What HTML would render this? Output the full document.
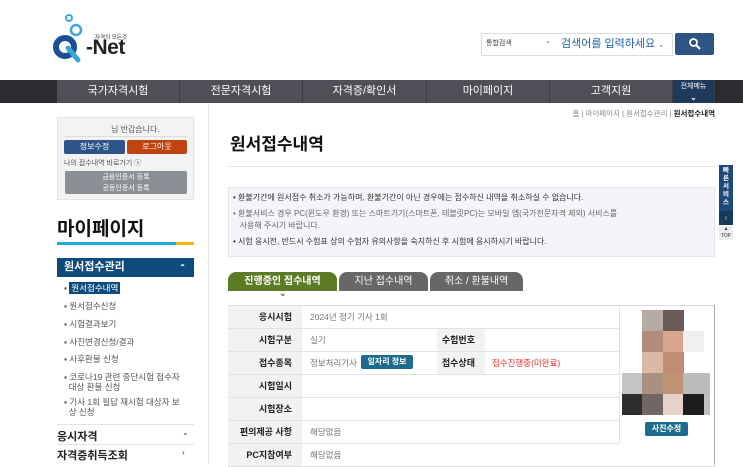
<!DOCTYPE html>
<html><head><meta charset="utf-8"><style>
*{margin:0;padding:0;box-sizing:border-box}
body{width:743px;height:465px;overflow:hidden;background:#fff;font-family:"Liberation Sans","Noto Sans CJK KR",sans-serif;position:relative;color:#333}
.a{position:absolute}
.nav{top:80px;left:0;width:743px;height:23px;background:#2b2b30}
.nav .it{position:absolute;top:0;height:23px;background:#4f4f58;color:#fff;font-size:11px;text-align:center;line-height:23px;border-right:1px solid #3c3c44}
.sb li{list-style:none;font-size:8.5px;color:#555;position:absolute;left:64px;line-height:10px}
.lbl{position:absolute;left:228px;width:74px;background:#f2f2f2;text-align:right;padding-right:10px;font-size:9px;font-weight:bold;color:#222;border-bottom:1px solid #e2e2e2;height:23px;line-height:23px}
.val{position:absolute;font-size:8.5px;color:#777;line-height:23px}
.rowl{position:absolute;left:228px;width:391px;height:1px;background:#e2e2e2}
.px{position:absolute;width:21px;height:21px}
</style></head><body>
<!-- logo -->
<svg class="a" style="left:52px;top:12px" width="40" height="54" viewBox="0 0 40 54">
<circle cx="17" cy="6" r="3" fill="none" stroke="#3aa7d9" stroke-width="2"/>
<circle cx="24" cy="18" r="5" fill="none" stroke="#3aa7d9" stroke-width="2.5"/>
<circle cx="13" cy="35" r="9" fill="none" stroke="#1a4f95" stroke-width="6"/>
<path d="M16 36 L26 48" stroke="#3aa7d9" stroke-width="5" stroke-linecap="round"/>
</svg>
<div class="a" style="left:95px;top:33px;font-size:5.5px;color:#333">자격의 모든것</div>
<div class="a" style="left:86px;top:37px;font-size:21px;font-weight:bold;color:#222;letter-spacing:-0.5px;line-height:22px">-Net</div>
<!-- search -->
<div class="a" style="left:481px;top:33px;width:192px;height:23px;border:1px solid #ddd;background:#fff"></div>
<div class="a" style="left:486px;top:38px;font-size:7px;color:#444">통합검색</div>
<div class="a" style="left:545px;top:37px;font-size:7px;color:#666">⌄</div>
<div class="a" style="left:561px;top:35px;font-size:11px;color:#1b5fae">검색어를 입력하세요 <span style="font-size:7px;color:#666">⌄</span></div>
<div class="a" style="left:675px;top:33px;width:39px;height:22px;background:#2e5385;border-radius:2px"></div>
<svg class="a" style="left:688px;top:37px" width="14" height="14"><circle cx="5.5" cy="5.5" r="3.5" fill="none" stroke="#fff" stroke-width="1.8"/><path d="M8 8 L12 12" stroke="#fff" stroke-width="2.2"/></svg>
<!-- nav -->
<div class="a nav">
<div class="it" style="left:57px;width:123px">국가자격시험</div>
<div class="it" style="left:180px;width:123px">전문자격시험</div>
<div class="it" style="left:303px;width:124px">자격증/확인서</div>
<div class="it" style="left:427px;width:123px">마이페이지</div>
<div class="it" style="left:550px;width:123px">고객지원</div>
<div class="it" style="left:673px;width:42px;background:#1d3a5a;font-size:7px;line-height:11px;padding-top:1px">전체메뉴<br><b style="font-size:8px">⌄</b></div>
</div>
<div class="a" style="right:28px;top:108px;font-size:7.5px;color:#888">홈 | 마이페이지 | 원서접수관리 | <b style="color:#222">원서접수내역</b></div>
<!-- sidebar -->
<div class="a" style="left:208px;top:103px;width:1px;height:362px;background:#e6e6e6"></div>
<div class="a" style="left:57px;top:117px;width:137px;height:83px;background:#f3f3f3;border:1px solid #e3e3e3"></div>
<div class="a" style="left:111px;top:124px;font-size:8px;color:#555">님 반갑습니다.</div>
<div class="a" style="left:64px;top:136px;width:123px;height:1px;background:#ddd"></div>
<div class="a" style="left:64px;top:140px;width:61px;height:14px;background:#2d5587;border-radius:2px;color:#fff;font-size:8px;text-align:center;line-height:14px">정보수정</div>
<div class="a" style="left:127px;top:140px;width:60px;height:14px;background:#c0440f;border-radius:2px;color:#fff;font-size:8px;text-align:center;line-height:14px">로그아웃</div>
<div class="a" style="left:64px;top:158px;font-size:7px;color:#555">나의 접수내역 바로가기 ⓢ</div>
<div class="a" style="left:65px;top:171px;width:122px;height:23px;background:#8b9097;border-radius:2px;color:#fff;font-size:7px;text-align:center;line-height:11px;padding-top:1px">금융인증서 등록<br>공동인증서 등록</div>
<div class="a" style="left:57px;top:214px;font-size:19px;font-weight:bold;color:#111">마이페이지</div>
<div class="a" style="left:57px;top:242px;width:119px;height:3px;background:#1fa9e1"></div>
<div class="a" style="left:176px;top:242px;width:18px;height:3px;background:#f6b600"></div>
<div class="a" style="left:57px;top:258px;width:137px;height:19px;background:#0e4a7c;color:#fff;font-size:11px;font-weight:bold;line-height:19px;padding-left:7px">원서접수관리<span style="position:absolute;right:8px;font-size:8px">⌃</span></div>
<ul class="sb">
<li style="top:283px">▪ <span style="background:#0e4a7c;color:#fff;padding:1px 2px">원서접수내역</span></li>
<li style="top:301px">▪ 원서접수신청</li>
<li style="top:319px">▪ 시험결과보기</li>
<li style="top:337px">▪ 사진변경신청/결과</li>
<li style="top:354px">▪ 사후환불 신청</li>
<li style="top:372px">▪ 코로나19 관련 중단시험 접수자<br>&nbsp;&nbsp;대상 환불 신청</li>
<li style="top:397px">▪ 기사 1회 필답 재시험 대상자 보<br>&nbsp;&nbsp;상 신청</li>
</ul>
<div class="a" style="left:57px;top:424px;width:137px;height:1px;background:#e3e3e3"></div>
<div class="a" style="left:57px;top:428px;font-size:11px;font-weight:bold;color:#222">응시자격</div>
<div class="a" style="left:182px;top:428px;font-size:8px">⌄</div>
<div class="a" style="left:57px;top:444px;width:137px;height:1px;background:#e3e3e3"></div>
<div class="a" style="left:57px;top:447px;font-size:11px;font-weight:bold;color:#222">자격증취득조회</div>
<div class="a" style="left:182px;top:448px;font-size:8px">›</div>
<!-- main -->
<div class="a" style="left:230px;top:130px;font-size:17px;font-weight:bold;color:#111">원서접수내역</div>
<div class="a" style="left:228px;top:166px;width:487px;height:1px;background:#e6e6e6"></div>
<div class="a" style="left:228px;top:187px;width:487px;height:70px;background:#f3f5f8;border:1px solid #e2e5ea"></div>
<div class="a" style="left:233px;top:192px;font-size:8px;color:#333;line-height:12px">
<div>• 환불기간에 원서접수 취소가 가능하며, 환불기간이 아닌 경우에는 접수하신 내역을 취소하실 수 없습니다.</div>
<div style="margin-top:4px;color:#666">• 환불서비스 경우 PC(윈도우 환경) 또는 스마트기기(스마트폰, 테블릿PC)는 모바일 앱(국가전문자격 제외) 서비스를<br>&nbsp;&nbsp;&nbsp;사용해 주시기 바랍니다.</div>
<div style="margin-top:4px">• 시험 응시전, 반드시 수험표 상의 수험자 유의사항을 숙지하신 후 시험에 응시하시기 바랍니다.</div>
</div>
<div class="a" style="left:228px;top:272px;width:109px;height:19px;background:#5b7c25;border-radius:8px 8px 0 0;color:#fff;font-size:10px;font-weight:bold;text-align:center;line-height:19px">진행중인 접수내역</div>
<div class="a" style="left:339px;top:272px;width:89px;height:19px;background:#676767;border-radius:8px 8px 0 0;color:#fff;font-size:10px;text-align:center;line-height:19px">지난 접수내역</div>
<div class="a" style="left:430px;top:272px;width:93px;height:19px;background:#676767;border-radius:8px 8px 0 0;color:#fff;font-size:10px;text-align:center;line-height:19px">취소 / 환불내역</div>
<div class="a" style="left:279px;top:288px;font-size:9px;color:#5b7c25;font-weight:bold">⌄</div>
<!-- table -->
<div class="a" style="left:228px;top:305px;width:487px;height:1px;background:#ddd"></div>
<div class="a" style="left:714px;top:305px;width:1px;height:160px;background:#aaa"></div>
<div class="lbl" style="top:306px">응시시험</div>
<div class="lbl" style="top:329px">시험구분</div>
<div class="lbl" style="top:352px">접수종목</div>
<div class="lbl" style="top:375px">시험일시</div>
<div class="lbl" style="top:398px">시험장소</div>
<div class="lbl" style="top:421px">편의제공 사항</div>
<div class="lbl" style="top:444px">PC지참여부</div>
<div class="lbl" style="top:329px;left:437px;width:48px">수험번호</div>
<div class="lbl" style="top:352px;left:437px;width:48px">접수상태</div>
<div class="rowl" style="top:328px"></div><div class="rowl" style="top:351px"></div><div class="rowl" style="top:374px"></div><div class="rowl" style="top:397px"></div><div class="rowl" style="top:420px"></div><div class="rowl" style="top:443px"></div>
<div class="a" style="left:228px;top:466px;width:487px;height:1px;background:#ddd"></div>
<div class="a" style="left:619px;top:305px;width:1px;height:138px;background:#e2e2e2"></div>
<div class="val" style="left:310px;top:306px">2024년 정기 기사 1회</div>
<div class="val" style="left:310px;top:329px">실기</div>
<div class="val" style="left:310px;top:352px">정보처리기사</div>
<div class="a" style="left:361px;top:355px;width:52px;height:14px;background:#1f6b8f;border-radius:2px;color:#fff;font-size:8px;font-weight:bold;text-align:center;line-height:14px">일자리 정보</div>
<div class="val" style="left:492px;top:352px;color:#e83030">접수진행중(미완료)</div>
<div class="val" style="left:310px;top:421px">해당없음</div>
<div class="val" style="left:310px;top:444px">해당없음</div>
<!-- photo -->
<div class="px" style="left:642px;top:310px;background:#b8aaa5"></div>
<div class="px" style="left:663px;top:310px;background:#6a5b57"></div>
<div class="px" style="left:642px;top:331px;background:#b28e7a"></div>
<div class="px" style="left:663px;top:331px;background:#d9a58c"></div>
<div class="px" style="left:683px;top:331px;background:#f0efee"></div>
<div class="px" style="left:642px;top:352px;background:#dcb9a4"></div>
<div class="px" style="left:663px;top:352px;background:#c08c72"></div>
<div class="px" style="left:622px;top:373px;background:#c4c4c4"></div>
<div class="px" style="left:642px;top:373px;background:#aa9080"></div>
<div class="px" style="left:663px;top:373px;background:#bd9373"></div>
<div class="px" style="left:683px;top:373px;background:#bbb;width:27px"></div>
<div class="px" style="left:622px;top:394px;background:#2d2d2d"></div>
<div class="px" style="left:642px;top:394px;background:#716661"></div>
<div class="px" style="left:663px;top:394px;background:#e6d2c8"></div>
<div class="px" style="left:683px;top:394px;background:#1c1c1c"></div>
<div class="px" style="left:704px;top:394px;background:#c0c0c0;width:6px"></div>
<div class="a" style="left:645px;top:422px;width:43px;height:14px;background:#1f6b8f;border-radius:2px;color:#fff;font-size:8px;font-weight:bold;text-align:center;line-height:14px">사진수정</div>
<!-- quick -->
<div class="a" style="left:719px;top:165px;width:14px;height:60px;background:#1d4a78;color:#fff;font-size:6.5px;font-weight:bold;text-align:center;line-height:8px;padding-top:2px">빠<br>른<br>서<br>비<br>스</div>
<div class="a" style="left:719px;top:211px;width:14px;height:14px;background:#123a5f;color:#e6d000;font-size:8px;text-align:center;line-height:14px">‹</div>
<div class="a" style="left:719px;top:226px;width:14px;height:14px;background:#eee;font-size:5px;text-align:center;line-height:7px;color:#333">▲<br>TOP</div>
</body></html>
